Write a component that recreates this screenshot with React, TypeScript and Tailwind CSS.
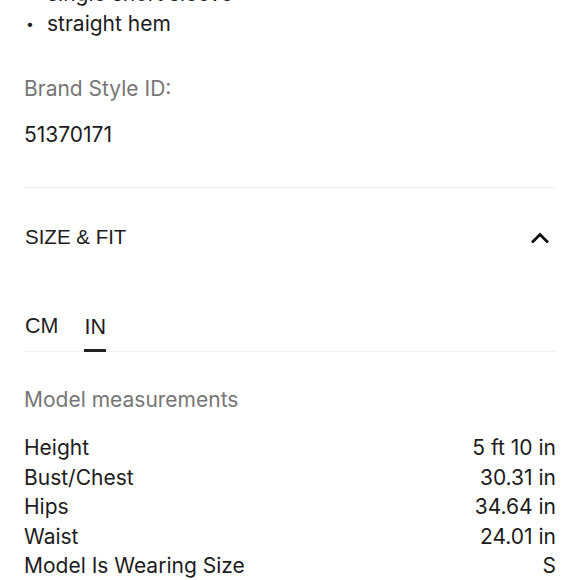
import React from 'react';

const rows = [
  { label: 'Height', value: '5 ft 10 in' },
  { label: 'Bust/Chest', value: '30.31 in' },
  { label: 'Hips', value: '34.64 in' },
  { label: 'Waist', value: '24.01 in' },
  { label: 'Model Is Wearing Size', value: 'S' },
];

export default function App() {
  return (
    <div className="w-[580px] h-[580px] overflow-hidden bg-white text-[#1c1c1c] font-['Inter',sans-serif] text-[21px] leading-[30px]">
      <div className="px-[24px] -mt-[21px]">
        {/* Details bullets */}
        <ul>
          <li className="flex items-center">
            <span className="w-[23px] text-[14px] pl-[2px]">•</span>
            <span>single short sleeve</span>
          </li>
          <li className="flex items-center">
            <span className="w-[23px] text-[14px] pl-[2px]">•</span>
            <span>straight hem</span>
          </li>
        </ul>

        <div className="mt-[35px] text-[#767676]">Brand Style ID:</div>
        <div className="mt-[16px]">51370171</div>

        <div className="mt-[37px] border-t border-[#f0f0f0]" />

        {/* Accordion header */}
        <div className="flex items-center justify-between h-[98px] font-['Liberation_Sans',sans-serif]">
          <span className="text-[20.5px] pl-px">SIZE &amp; FIT</span>
          <svg width="20" height="12" viewBox="0 0 20 12" className="mr-[6px] mt-[2px]">
            <path d="M2 10.5 L10 2.5 L18 10.5" fill="none" stroke="#111" strokeWidth="2.8" />
          </svg>
        </div>

        {/* Unit tabs */}
        <div className="mt-[25px] flex gap-[26px] border-b border-[#f0f0f0] font-['Liberation_Sans',sans-serif] text-[21.5px]">
          <button className="pb-[10px] leading-[30px] pl-px">CM</button>
          <button className="pb-[7px] leading-[30px] border-b-[3px] border-[#222] -mb-px">IN</button>
        </div>

        <div className="mt-[33px] text-[#767676]">Model measurements</div>

        <div className="mt-[18px] leading-[29.5px]">
          {rows.map((r) => (
            <div key={r.label} className="flex justify-between">
              <span>{r.label}</span>
              <span>{r.value}</span>
            </div>
          ))}
        </div>
      </div>
    </div>
  );
}
